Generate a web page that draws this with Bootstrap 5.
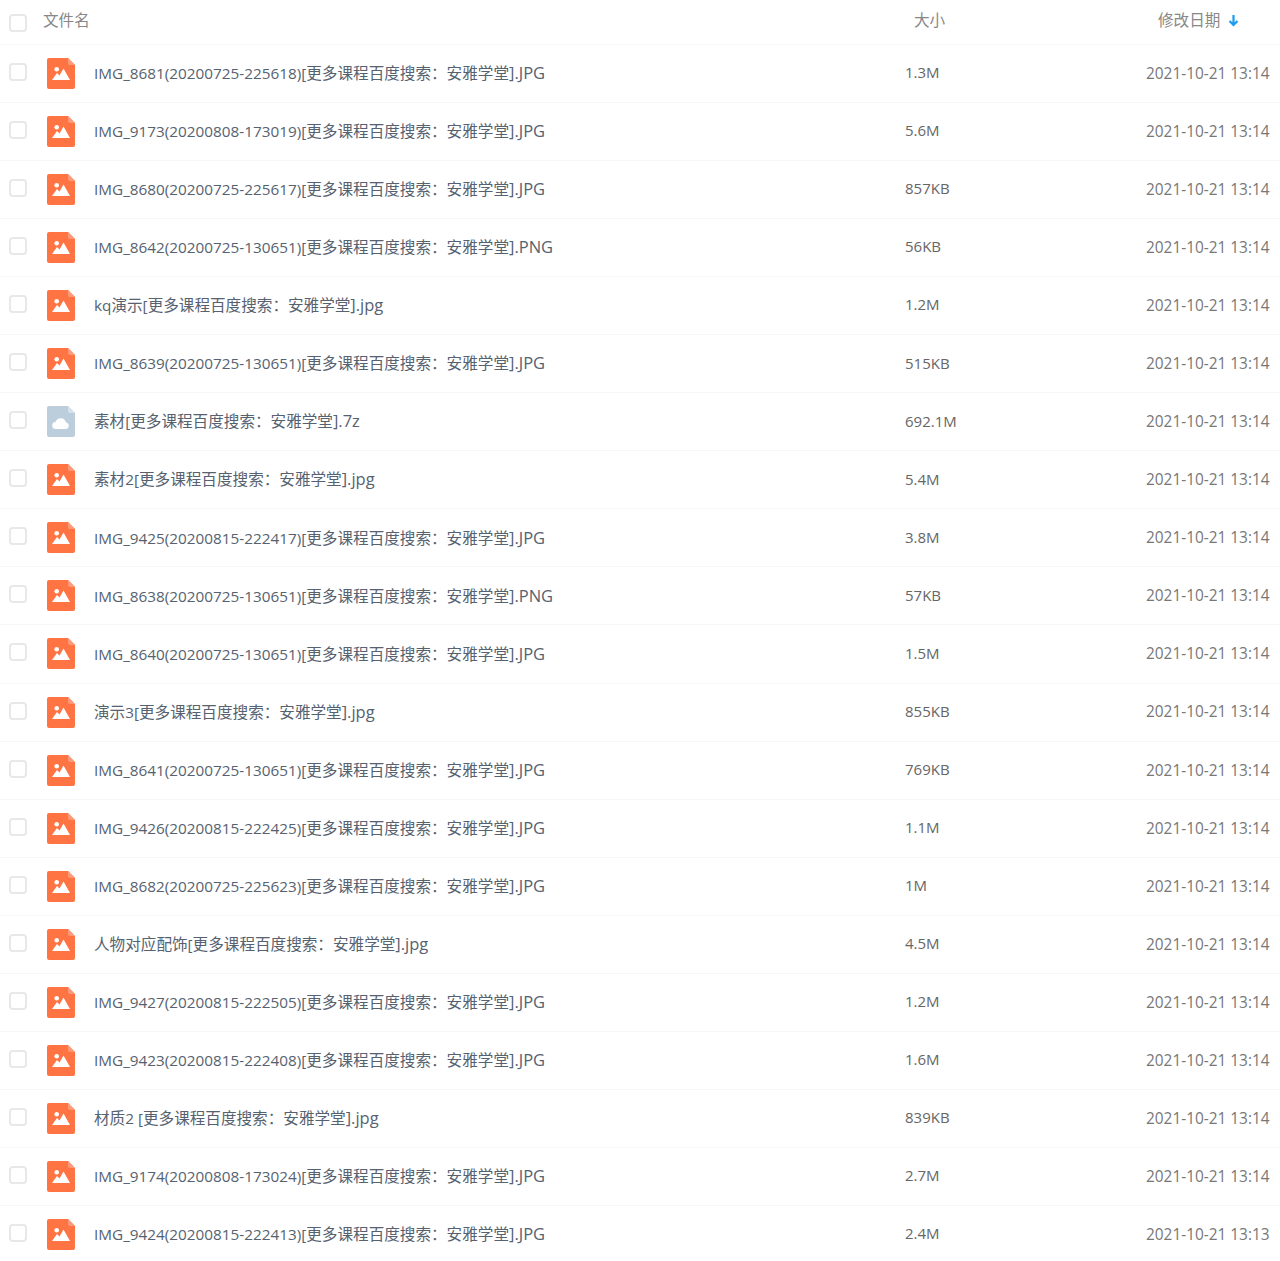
<!DOCTYPE html>
<html lang="zh-CN">
<head>
    <meta charset="UTF-8">
    <meta name="viewport" content="width=device-width, initial-scale=1.0">
    <title>文件列表</title>
    <link href="https://cdn.jsdelivr.net/npm/bootstrap@5.3.0/dist/css/bootstrap.min.css" rel="stylesheet">
    <style>
        body { background: #fff; font-family: "Open Sans", "Noto Sans CJK SC", sans-serif; font-size: 15px; color: #666; overflow: hidden; }
        .file-head, .file-row { display: flex; align-items: center; border-bottom: 1px solid #f7f7f7; }
        .file-head { height: 45px; color: #888; }
        .file-row { height: 58.05px; }
        .file-check { width: 18px; height: 18px; margin: -3px 0 0 9px; border: 2px solid #e8e8e8; border-radius: 3px; flex: none; }
        .file-head .file-check { margin-top: 2px; }
        .head-name, .head-size, .head-date { font-size: 15.6px; padding-bottom: 3px; }
        .head-name { margin-left: 16px; width: 835px; }
        .head-size { width: 280px; padding-left: 36px; }
        .file-ico { width: 28px; height: 31px; margin-left: 20px; flex: none; }
        .file-name { margin-left: 19px; width: 811px; color: #566270; font-size: 15.3px; white-space: nowrap; flex: none; }
        .cjk-part { font-size: 15.6px; }
        .ext-part { font-size: 16.5px; }
        .file-size { width: 241px; flex: none; padding-bottom: 2px; }
        .file-date { color: #777; font-size: 15.4px; white-space: nowrap; }
    </style>
</head>
<body>
    <div id="files">
        <div class="file-head">
            <input class="form-check-input file-check" type="checkbox">
            <div class="head-name">文件名</div>
            <div class="head-size">大小</div>
            <div class="head-date d-flex align-items-center gap-2">修改日期
                <svg width="11" height="13" viewBox="0 0 11 13"><path d="M5.500 1v10M1.500 7l4 4 4-4" fill="none" stroke="#1a9cf0" stroke-width="2.200"/></svg>
            </div>
        </div>
    </div>

    <script>
        const tail = '[更多课程百度搜索：安雅学堂]';
        const rows = [
            ['IMG_8681(20200725-225618)' + tail + '.JPG', '1.3M'],
            ['IMG_9173(20200808-173019)' + tail + '.JPG', '5.6M'],
            ['IMG_8680(20200725-225617)' + tail + '.JPG', '857KB'],
            ['IMG_8642(20200725-130651)' + tail + '.PNG', '56KB'],
            ['kq演示' + tail + '.jpg', '1.2M'],
            ['IMG_8639(20200725-130651)' + tail + '.JPG', '515KB'],
            ['素材' + tail + '.7z', '692.1M', 'zip'],
            ['素材2' + tail + '.jpg', '5.4M'],
            ['IMG_9425(20200815-222417)' + tail + '.JPG', '3.8M'],
            ['IMG_8638(20200725-130651)' + tail + '.PNG', '57KB'],
            ['IMG_8640(20200725-130651)' + tail + '.JPG', '1.5M'],
            ['演示3' + tail + '.jpg', '855KB'],
            ['IMG_8641(20200725-130651)' + tail + '.JPG', '769KB'],
            ['IMG_9426(20200815-222425)' + tail + '.JPG', '1.1M'],
            ['IMG_8682(20200725-225623)' + tail + '.JPG', '1M'],
            ['人物对应配饰' + tail + '.jpg', '4.5M'],
            ['IMG_9427(20200815-222505)' + tail + '.JPG', '1.2M'],
            ['IMG_9423(20200815-222408)' + tail + '.JPG', '1.6M'],
            ['材质2 ' + tail + '.jpg', '839KB'],
            ['IMG_9174(20200808-173024)' + tail + '.JPG', '2.7M'],
            ['IMG_9424(20200815-222413)' + tail + '.JPG', '2.4M', '', '2021-10-21 13:13']
        ];

        const body = 'M2 0h19l7 7v22a2 2 0 0 1-2 2H2a2 2 0 0 1-2-2V2a2 2 0 0 1 2-2z';
        const imgIco = `<svg class="file-ico" viewBox="0 0 28 31"><path d="${body}" fill="#ff7442"/><path d="M21 0l7 7h-5a2 2 0 0 1-2-2z" fill="#ff9a78"/><circle cx="9.700" cy="11.300" r="2.300" fill="#fff"/><path d="M5 22l5-7 2.500 2.500 4-7 6.500 11.500z" fill="#fff"/></svg>`;
        const zipIco = `<svg class="file-ico" viewBox="0 0 28 31"><path d="${body}" fill="#bccddc"/><path d="M21 0l7 7h-5a2 2 0 0 1-2-2z" fill="#d6e1ea"/><path d="M9 23a3.500 3.500 0 0 1-.5-7 5.500 5.500 0 0 1 10.500.5 3.300 3.300 0 0 1 0 6.500z" fill="#fff"/></svg>`;

        // Chinese runs are slightly larger than the latin ones, so is the part after them
        const wrapCjk = s => s
            .replace(/\]\.\w+$/, m => `<span class="ext-part">${m}</span>`)
            .replace(/[\u3000-\uffff]+/g, m => `<span class="cjk-part">${m}</span>`);

        let html = '';
        rows.forEach(r => {
            html += `
            <div class="file-row">
                <input class="form-check-input file-check" type="checkbox">
                ${r[2] === 'zip' ? zipIco : imgIco}
                <div class="file-name">${wrapCjk(r[0])}</div>
                <div class="file-size">${r[1]}</div>
                <div class="file-date">${r[3] || '2021-10-21 13:14'}</div>
            </div>`;
        });
        document.getElementById('files').insertAdjacentHTML('beforeend', html);
    </script>
    <script src="https://cdn.jsdelivr.net/npm/bootstrap@5.3.0/dist/js/bootstrap.bundle.min.js"></script>
</body>
</html>
